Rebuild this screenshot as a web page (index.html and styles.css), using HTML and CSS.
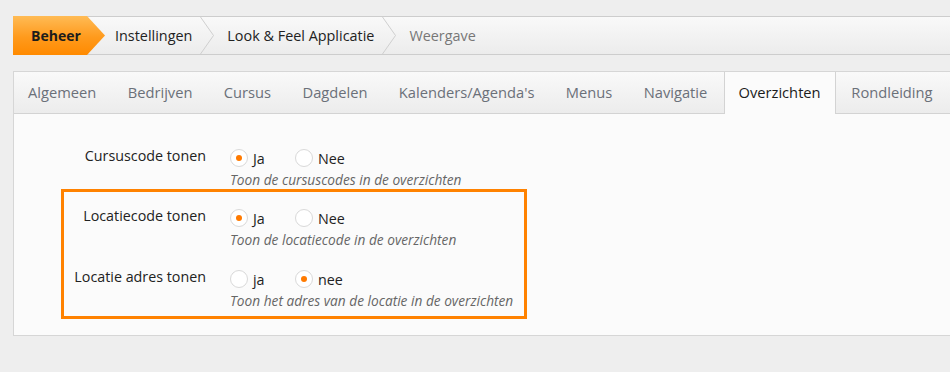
FILE: index.html
```html
<!DOCTYPE html>
<html lang="nl">
<head>
<meta charset="utf-8">
<title>Weergave</title>
<link rel="stylesheet" href="styles.css">
</head>
<body>
<div class="page">
  <nav class="crumbs">
    <span class="crumb crumb-home">Beheer</span>
    <span class="crumb">Instellingen</span>
    <svg class="sep" width="15" height="37" viewBox="0 0 15 37"><polyline points="0.5,0 13.5,18.5 0.5,37" fill="none" stroke="#cfcfcf" stroke-width="1"/></svg>
    <span class="crumb">Look &amp; Feel Applicatie</span>
    <svg class="sep" width="15" height="37" viewBox="0 0 15 37"><polyline points="0.5,0 13.5,18.5 0.5,37" fill="none" stroke="#cfcfcf" stroke-width="1"/></svg>
    <span class="crumb crumb-current">Weergave</span>
  </nav>

  <section class="panel">
    <ul class="tabs">
      <li class="tab">Algemeen</li>
      <li class="tab">Bedrijven</li>
      <li class="tab">Cursus</li>
      <li class="tab">Dagdelen</li>
      <li class="tab">Kalenders/Agenda's</li>
      <li class="tab">Menus</li>
      <li class="tab">Navigatie</li>
      <li class="tab tab-active">Overzichten</li>
      <li class="tab">Rondleiding</li>
    </ul>
    <div class="content">
      <div class="row row-plain">
        <div class="label">Cursuscode tonen</div>
        <div class="field">
          <div class="options">
            <span class="option"><span class="radio checked"></span>Ja</span>
            <span class="option"><span class="radio"></span>Nee</span>
          </div>
          <div class="help">Toon de cursuscodes in de overzichten</div>
        </div>
      </div>
      <div class="highlight">
        <div class="row">
          <div class="label">Locatiecode tonen</div>
          <div class="field">
            <div class="options">
              <span class="option"><span class="radio checked"></span>Ja</span>
              <span class="option"><span class="radio"></span>Nee</span>
            </div>
            <div class="help">Toon de locatiecode in de overzichten</div>
          </div>
        </div>
        <div class="row row-next">
          <div class="label">Locatie adres tonen</div>
          <div class="field">
            <div class="options">
              <span class="option"><span class="radio"></span>ja</span>
              <span class="option"><span class="radio checked"></span>nee</span>
            </div>
            <div class="help">Toon het adres van de locatie in de overzichten</div>
          </div>
        </div>
      </div>
    </div>
  </section>
</div>
</body>
</html>
```

FILE: styles.css
```css
* { box-sizing: border-box; }

html, body {
  margin: 0;
  padding: 0;
}

body {
  background: #eeeeee;
  font-family: "Open Sans", "DejaVu Sans", sans-serif;
  font-size: 14px;
  color: #222;
}

.page {
  padding: 16px 0 0 13px;
  width: 960px;
}

/* Breadcrumb */
.crumbs {
  display: flex;
  align-items: center;
  height: 39px;
  border-top: 1px solid #cdcdcd;
  border-bottom: 1px solid #cdcdcd;
  background: linear-gradient(#f9f9f9, #ececec);
  font-size: 14.4px;
}

.crumb {
  line-height: 37px;
  white-space: nowrap;
}

.crumb-home {
  align-self: stretch;
  margin: -1px 0;
  height: 39px;
  line-height: 39px;
  width: 92px;
  padding-left: 18px;
  font-weight: bold;
  font-size: 14px;
  color: #1c1c1c;
  background: linear-gradient(#ffbb55, #ff9a1c 55%, #ff8a00);
  clip-path: polygon(0 0, 74px 0, 100% 50%, 74px 100%, 0 100%);
  margin-right: 10px;
}

.sep {
  display: block;
  margin: 0 12px 0 8px;
  flex: none;
}

.crumb-current {
  color: #777;
}

/* Panel with tabs */
.panel {
  margin-top: 16px;
  border: 1px solid #d6d6d6;
  border-right: none;
  background: #fbfbfb;
}

.tabs {
  display: flex;
  list-style: none;
  margin: 0;
  padding: 0;
  height: 42px;
  border-bottom: 1px solid #d3d3d3;
  background: linear-gradient(#f9f9f9, #ececec);
  font-size: 14.7px;
}

.tab {
  padding: 0 15.7px 0 14px;
  line-height: 41px;
  color: #6b7079;
  white-space: nowrap;
}

.tab + .tab {
  padding-left: 15.7px;
}

.tab-active {
  color: #1c1c1c;
  background: #fbfbfb;
  border-left: 1px solid #d3d3d3;
  border-right: 1px solid #d3d3d3;
  height: 42px;
  padding: 0 14px 0 13.5px !important;
  margin-left: 1px;
}

/* Form content */
.content {
  padding: 32px 0 16px 47px;
}

.row {
  display: flex;
  align-items: flex-start;
}

.row-plain {
  padding-left: 3px;
}

.row-next {
  margin-top: 18px;
}

.label {
  width: 142px;
  text-align: right;
  line-height: 20px;
  font-size: 14.3px;
  flex: none;
}

.field {
  margin-left: 24px;
}

.options {
  display: flex;
  height: 24px;
  align-items: center;
}

.option {
  display: flex;
  align-items: center;
  width: 65px;
  line-height: 20px;
  padding-top: 1px;
  font-size: 14.3px;
}

.radio {
  width: 18px;
  height: 18px;
  border: 1px solid #d9d9d9;
  border-radius: 50%;
  background: #ffffff;
  margin-right: 5px;
  margin-top: -2px;
  flex: none;
  display: flex;
  align-items: center;
  justify-content: center;
}

.radio.checked::after {
  content: "";
  width: 6px;
  height: 6px;
  border-radius: 50%;
  background: #ff7a00;
}

.help {
  margin-top: 1px;
  line-height: 18px;
  font-size: 13.7px;
  font-style: italic;
  color: #666;
}

.highlight {
  margin-top: 0;
  width: 466px;
  border: 3px solid #ff8200;
  padding: 14px 0 6px;
}
```
